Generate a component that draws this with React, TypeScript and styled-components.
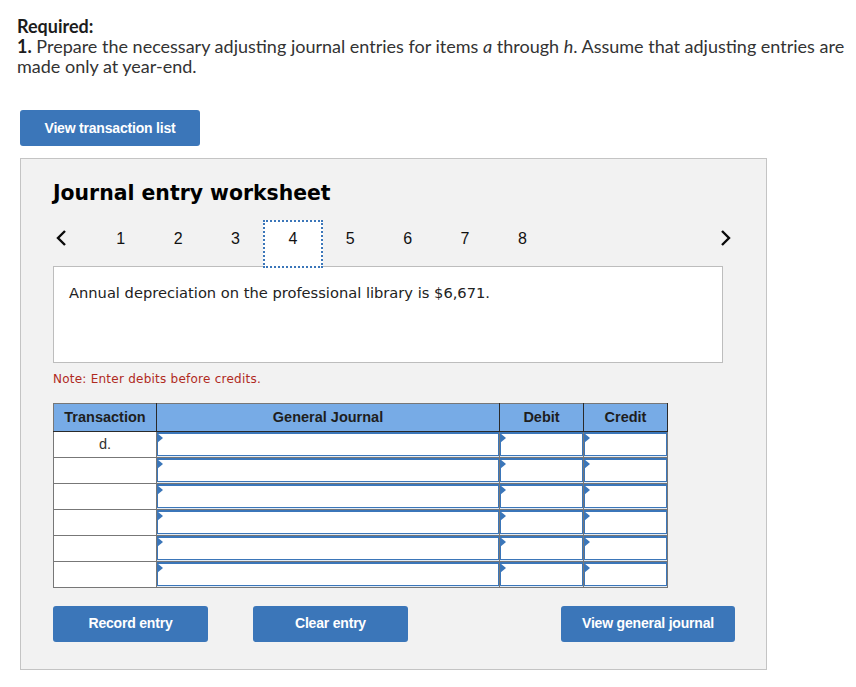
import React from 'react';
import styled, { createGlobalStyle } from 'styled-components';

const GlobalStyle = createGlobalStyle`
  html, body {
    margin: 0;
    padding: 0;
    background: #fff;
  }
`;

const Page = styled.div`
  width: 856px;
  height: 687px;
  overflow: hidden;
  padding: 16px 0 0 20px;
  box-sizing: border-box;
`;

const Question = styled.div`
  margin-left: -3px;
  width: 836px;
  font-family: "Lato", sans-serif;
  font-size: 18px;
  line-height: 20px;
  color: #333;
  b { color: #1c1c1c; }
`;

const Button = styled.button<{ $width: number }>`
  display: block;
  flex: none;
  width: ${(p) => p.$width}px;
  height: 36px;
  padding: 0;
  border: none;
  border-radius: 3px;
  background: #3b76b9;
  color: #fff;
  font-family: "Liberation Sans", sans-serif;
  font-size: 14px;
  font-weight: 700;
  letter-spacing: -0.2px;
`;

const TopButton = styled(Button)`
  margin-top: 34px;
`;

const Panel = styled.div`
  margin-top: 12px;
  width: 747px;
  height: 512px;
  box-sizing: border-box;
  padding: 21px 32px 0;
  background: #f2f2f2;
  border: 1px solid #c4c4c4;
`;

const Title = styled.h2`
  margin: 0;
  font-family: "DejaVu Sans", sans-serif;
  font-size: 20.4px;
  line-height: 26px;
  font-weight: 700;
  color: #000;
`;

const Nav = styled.div`
  display: flex;
  align-items: center;
  height: 48px;
  margin-top: 14px;
  margin-bottom: -2px;
`;

const Arrow = styled.span`
  display: flex;
  flex: none;
  width: 39px;
  padding-bottom: 12px;
  svg { display: block; margin-left: 2px; }
`;

const Tab = styled.div<{ $active?: boolean }>`
  position: relative;
  flex: none;
  width: 57.4px;
  height: 48px;
  box-sizing: border-box;
  display: flex;
  align-items: center;
  justify-content: center;
  padding-bottom: 10px;
  font-family: "Liberation Sans", sans-serif;
  font-size: 16px;
  color: #111;
  ${(p) => p.$active && `
    width: 59.4px;
    margin: 0 -1px;
    background: #fff;
    outline: 2px dotted #3b76b9;
    outline-offset: -2px;
  `}
`;

const NextArrow = styled(Arrow)`
  margin-left: 169px;
  width: 12px;
  svg { margin-left: 0; }
`;

const Description = styled.div`
  width: 670px;
  height: 97px;
  box-sizing: border-box;
  padding: 16px 15px;
  background: #fff;
  border: 1px solid #bdbdbd;
  font-family: "DejaVu Sans", sans-serif;
  font-size: 14.67px;
  line-height: 20px;
  color: #222;
`;

const Note = styled.div`
  margin-top: 7px;
  font-family: "DejaVu Sans", sans-serif;
  font-size: 12px;
  letter-spacing: 0.24px;
  line-height: 18px;
  color: #b02a1e;
`;

const Grid = styled.table`
  margin-top: 15px;
  width: 615px;
  border-collapse: collapse;
  table-layout: fixed;
  font-family: "Liberation Sans", sans-serif;
  font-size: 14.5px;
`;

const Head = styled.th<{ $width: number }>`
  width: ${(p) => p.$width}px;
  height: 28px;
  padding: 0 0 2px;
  box-sizing: border-box;
  background: #77abe6;
  border: 1px solid #2a2a2a;
  border-top-color: #777;
  border-left-color: #777;
  color: #1e1e1e;
  font-weight: 700;
`;

const LabelCell = styled.td`
  height: 26px;
  padding: 0 0 1px;
  box-sizing: border-box;
  background: #fff;
  border: 1px solid #777;
  text-align: center;
  color: #333;
  line-height: 1;
`;

const InputCell = styled.td`
  height: 26px;
  padding: 0 0 1px;
  box-sizing: border-box;
  background: #e2ecf7;
  border: 1px solid #777;
`;

const EntryBox = styled.div`
  position: relative;
  height: 24px;
  box-sizing: border-box;
  background: #fff;
  border: 1px solid #3b76b9;
  border-top-width: 2px;
  &::after {
    content: "";
    position: absolute;
    left: -1px;
    top: -1px;
    border-left: 6px solid #3b76b9;
    border-top: 5px solid transparent;
    border-bottom: 5px solid transparent;
  }
`;

const Actions = styled.div`
  display: flex;
  margin-top: 18px;
  gap: 45px;
  button { padding-bottom: 2px; }
`;

const LastButton = styled(Button)`
  margin-left: 108px;
`;

const Chevron = ({ d }: { d: string }) => (
  <svg width="12" height="18" viewBox="0 0 12 18" fill="none" stroke="#0a0a0a" strokeWidth="2.4">
    <path d={d} />
  </svg>
);

const tabs = [1, 2, 3, 4, 5, 6, 7, 8];
const rows = ['d.', '', '', '', '', ''];

export default function App() {
  return (
    <Page>
      <GlobalStyle />
      <Question>
        <b>Required:</b>
        <br />
        <b>1.</b> Prepare the necessary adjusting journal entries for items <i>a</i> through <i>h</i>. Assume that adjusting entries are made only at year-end.
      </Question>
      <TopButton $width={180}>View transaction list</TopButton>
      <Panel>
        <Title>Journal entry worksheet</Title>
        <Nav>
          <Arrow>
            <Chevron d="M10 2 3 9l7 7" />
          </Arrow>
          {tabs.map((t) => (
            <Tab key={t} $active={t === 4}>{t}</Tab>
          ))}
          <NextArrow>
            <Chevron d="M2 2l7 7-7 7" />
          </NextArrow>
        </Nav>
        <Description>Annual depreciation on the professional library is $6,671.</Description>
        <Note>Note: Enter debits before credits.</Note>
        <Grid>
          <thead>
            <tr>
              <Head $width={103}>Transaction</Head>
              <Head $width={343}>General Journal</Head>
              <Head $width={84}>Debit</Head>
              <Head $width={84}>Credit</Head>
            </tr>
          </thead>
          <tbody>
            {rows.map((label, i) => (
              <tr key={i}>
                <LabelCell>{label}</LabelCell>
                <InputCell><EntryBox /></InputCell>
                <InputCell><EntryBox /></InputCell>
                <InputCell><EntryBox /></InputCell>
              </tr>
            ))}
          </tbody>
        </Grid>
        <Actions>
          <Button $width={155}>Record entry</Button>
          <Button $width={155}>Clear entry</Button>
          <LastButton $width={174}>View general journal</LastButton>
        </Actions>
      </Panel>
    </Page>
  );
}
